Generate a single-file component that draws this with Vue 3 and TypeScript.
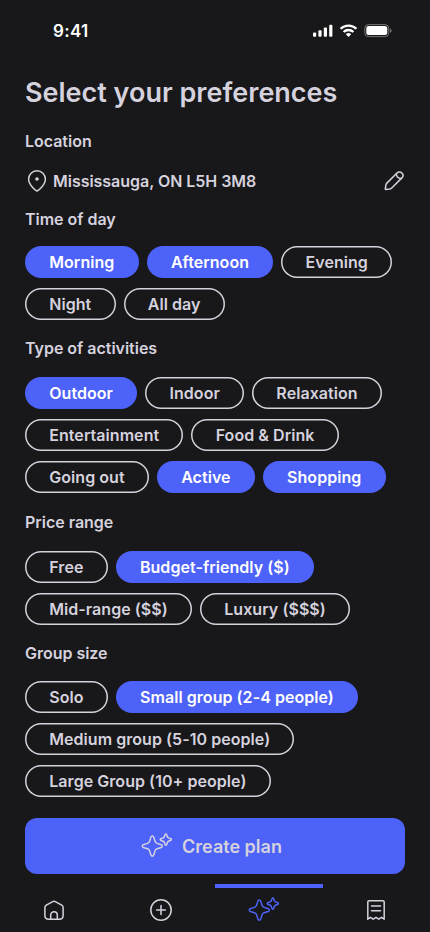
<script setup lang="ts">
import { ref } from 'vue'

interface Option {
  label: string
  selected: boolean
}
interface Group {
  id: string
  title: string
  options: Option[]
}

const make = (id: string, title: string, labels: string[], chosen: string[]): Group => ({
  id,
  title,
  options: labels.map((label) => ({ label, selected: chosen.includes(label) })),
})

const groups = ref<Group[]>([
  make('time', 'Time of day', ['Morning', 'Afternoon', 'Evening', 'Night', 'All day'], ['Morning', 'Afternoon']),
  make(
    'activities',
    'Type of activities',
    ['Outdoor', 'Indoor', 'Relaxation', 'Entertainment', 'Food & Drink', 'Going out', 'Active', 'Shopping'],
    ['Outdoor', 'Active', 'Shopping'],
  ),
  make('price', 'Price range', ['Free', 'Budget-friendly ($)', 'Mid-range ($$)', 'Luxury ($$$)'], ['Budget-friendly ($)']),
  make(
    'size',
    'Group size',
    ['Solo', 'Small group (2-4 people)', 'Medium group (5-10 people)', 'Large Group (10+ people)'],
    ['Small group (2-4 people)'],
  ),
])

const bigStar =
  'M11.3 3c.7 0 1.2.4 1.4 1.1l1.3 4.2c.4 1.2.9 1.7 2.1 2.1l4.2 1.3c1.4.5 1.4 2.3 0 2.8l-4.2 1.3c-1.2.4-1.7.9-2.1 2.1l-1.3 4.2c-.5 1.4-2.3 1.4-2.8 0l-1.3-4.2c-.4-1.2-.9-1.7-2.1-2.1l-4.2-1.3c-1.4-.5-1.4-2.3 0-2.8l4.2-1.3c1.2-.4 1.7-.9 2.1-2.1l1.3-4.2c.2-.7.7-1.1 1.4-1.1z'
const smallStar =
  'M24.9 1c.4 0 .6.2.7.5l.9 2.4c.2.5.5.8 1 1l2.4.9c.7.3.7 1.2 0 1.5l-2.4.9c-.5.2-.8.5-1 1l-.9 2.4c-.3.7-1.2.7-1.5 0l-.9-2.4c-.2-.5-.5-.8-1-1l-2.4-.9c-.7-.3-.7-1.2 0-1.5l2.4-.9c.5-.2.8-.5 1-1l.9-2.4c.1-.3.4-.5.8-.5z'
</script>

<template>
  <div class="screen">
    <header class="status">
      <span class="clock">9:41</span>
      <svg class="signals" width="80" height="16" viewBox="0 0 80 16">
        <g fill="#fff">
          <rect x="0" y="9.5" width="3.2" height="4.3" rx="1" />
          <rect x="5.4" y="7.2" width="3.2" height="6.6" rx="1" />
          <rect x="10.8" y="4.6" width="3.2" height="9.2" rx="1" />
          <rect x="16.2" y="1.8" width="3.2" height="12" rx="1" />
        </g>
        <g fill="none" stroke="#fff" stroke-width="2.3">
          <path d="M27.6 5.8a11.3 11.3 0 0 1 15.8 0" />
          <path d="M30.6 9a7 7 0 0 1 9.8 0" />
        </g>
        <path d="M35.5 13.9l-2.7-2.7a3.9 3.9 0 0 1 5.4 0z" fill="#fff" />
        <rect x="51.8" y="1.6" width="24" height="12" rx="3.8" fill="none" stroke="#fff" stroke-opacity=".4" />
        <rect x="53.3" y="3.1" width="21" height="9" rx="2.5" fill="#fff" />
        <path d="M77.2 5.6v4.1c.8-.3 1.3-1.1 1.3-2s-.5-1.7-1.3-2.1z" fill="#fff" fill-opacity=".45" />
      </svg>
    </header>

    <main class="content">
      <h1>Select your preferences</h1>
      <h2 class="location-title">Location</h2>
      <div class="location">
        <svg width="24" height="24" viewBox="0 0 24 24" fill="none" stroke="currentColor" stroke-width="1.5" stroke-linejoin="round">
          <path d="M12 22.2c-1-.5-8.4-6.3-8.4-12a8.4 8.4 0 0 1 16.8 0c0 5.7-7.4 11.5-8.4 12z" />
          <circle cx="12" cy="10" r="1.8" fill="currentColor" stroke="none" />
        </svg>
        <span>Mississauga, ON L5H 3M8</span>
        <svg class="edit" width="24" height="24" viewBox="0 0 24 24" fill="none" stroke="currentColor" stroke-width="1.5" stroke-linecap="round" stroke-linejoin="round">
          <path d="M16 4L6.1 13.9c-.7.7-1.1 1.5-1.3 2.4L4.3 20.1c0 .3.2.5.5.5l3.9-.5c.9-.2 1.6-.6 2.3-1.3L20.9 8.9c1.4-1.4 1.4-3.5 0-4.9s-3.5-1.4-4.9 0z" />
          <path d="M15.3 4.7c.2 2.6 2.1 4.6 4.9 4.9" />
        </svg>
      </div>

      <section v-for="group in groups" :key="group.id" :class="['group', group.id]">
        <h2>{{ group.title }}</h2>
        <div class="options">
          <button
            v-for="option in group.options"
            :key="option.label"
            type="button"
            :class="['pill', { selected: option.selected }]"
            :aria-pressed="option.selected"
            @click="option.selected = !option.selected"
          >{{ option.label }}</button>
        </div>
      </section>

      <button type="button" class="create">
        <svg width="32" height="26" viewBox="0 0 32 26" fill="none" stroke="currentColor" stroke-width="1.5">
          <path :d="bigStar" />
          <path :d="smallStar" />
        </svg>
        <span>Create plan</span>
      </button>
    </main>

    <nav class="tabs">
      <a class="tab">
        <svg width="24" height="24" viewBox="0 0 24 24" fill="none" stroke="currentColor" stroke-width="1.5" stroke-linejoin="round">
          <path d="M10.7 3.6L4.3 7.2c-.9.5-1.4 1.3-1.4 2.3v8.1c0 2.3 1.4 3.7 3.7 3.7h10.8c2.3 0 3.7-1.4 3.7-3.7V9.5c0-1-.5-1.8-1.4-2.3l-6.4-3.6c-.9-.5-1.7-.5-2.6 0z" />
          <path d="M8.7 21.3v-4.2c0-2 1.3-3.3 3.3-3.3s3.3 1.3 3.3 3.3v4.2" />
        </svg>
      </a>
      <a class="tab">
        <svg width="24" height="24" viewBox="0 0 24 24" fill="none" stroke="currentColor" stroke-width="1.5" stroke-linecap="round">
          <circle cx="12" cy="12" r="10.2" />
          <path d="M12 7.6v8.8M7.6 12h8.8" />
        </svg>
      </a>
      <a class="tab active">
        <svg width="32" height="26" viewBox="0 0 32 26" fill="none" stroke="currentColor" stroke-width="1.5">
          <path :d="bigStar" />
          <path :d="smallStar" />
        </svg>
      </a>
      <a class="tab">
        <svg width="24" height="24" viewBox="0 0 24 24" fill="none" stroke="currentColor" stroke-width="1.5" stroke-linejoin="round" stroke-linecap="round">
          <path d="M3.8 21.2V4.1c0-.9.4-1.3 1.3-1.3h13.8c.9 0 1.3.4 1.3 1.3v17.1l-2.7-1.9-2.7 1.9-2.8-1.9-2.8 1.9-2.7-1.9z" />
          <path d="M7.5 7.9h9M7.5 12.7h9" />
        </svg>
      </a>
    </nav>
  </div>
</template>

<style>
body {
  background: #18181a;
}
</style>

<style scoped>
.screen {
  box-sizing: border-box;
  width: 430px;
  height: 932px;
  display: flex;
  flex-direction: column;
  overflow: hidden;
  background: #18181a;
  color: #d5d2de;
  font-family: Inter, sans-serif;
  font-size: 16px;
  font-weight: 600;
}
.status {
  height: 62px;
  flex: none;
  box-sizing: border-box;
  padding: 0 37px 0 53px;
  display: flex;
  align-items: center;
  justify-content: space-between;
  color: #fff;
}
.clock {
  font-size: 17px;
  line-height: 22px;
  letter-spacing: 0.3px;
}
.content {
  flex: none;
  height: 822px;
  padding: 0 25px;
  display: flex;
  flex-direction: column;
}
h1,
h2 {
  margin: 0;
  font-weight: 600;
}
h1 {
  margin-top: 14px;
  font-size: 27px;
  line-height: 34px;
}
h2 {
  font-size: 16px;
  line-height: 20px;
  letter-spacing: -0.02px;
}
.location-title {
  margin-top: 21px;
}
.location {
  height: 24px;
  margin: 18px 0 16px;
  display: flex;
  align-items: center;
  gap: 4px;
  letter-spacing: -0.03px;
}
.location svg {
  flex: none;
}
.edit {
  margin-left: auto;
}
.group {
  display: flex;
  flex-direction: column;
  gap: 19px;
  margin-bottom: 18px;
}
.time {
  gap: 17px;
}
.activities {
  margin-bottom: 19px;
}
.size {
  gap: 18px;
  margin-bottom: 21px;
}
.options {
  display: flex;
  flex-wrap: wrap;
  gap: 10px 8px;
}
.pill {
  height: 32px;
  margin: 0;
  padding: 0 24.25px;
  border: 0;
  border-radius: 16px;
  box-shadow: inset 0 0 0 1.5px #d5d2de;
  background: transparent;
  color: inherit;
  font: inherit;
  line-height: 20px;
  letter-spacing: 0.05px;
  white-space: nowrap;
}
.pill.selected {
  box-shadow: none;
  background: #4d62f8;
  color: #fff;
}
.create {
  flex: none;
  height: 56px;
  margin: 0;
  padding: 0 7px 0 0;
  border: 0;
  border-radius: 12px;
  background: #4d62f8;
  color: #d5d2de;
  display: flex;
  align-items: center;
  justify-content: center;
  gap: 9px;
  font: inherit;
  font-size: 18px;
}
.tabs {
  flex: 1;
  display: grid;
  grid-template-columns: repeat(4, 1fr);
}
.tab {
  box-sizing: border-box;
  border-top: 4px solid transparent;
  display: flex;
  align-items: center;
  justify-content: center;
}
.tab.active {
  padding-right: 10px;
  border-color: #4d62f8;
  color: #4d62f8;
}
</style>
